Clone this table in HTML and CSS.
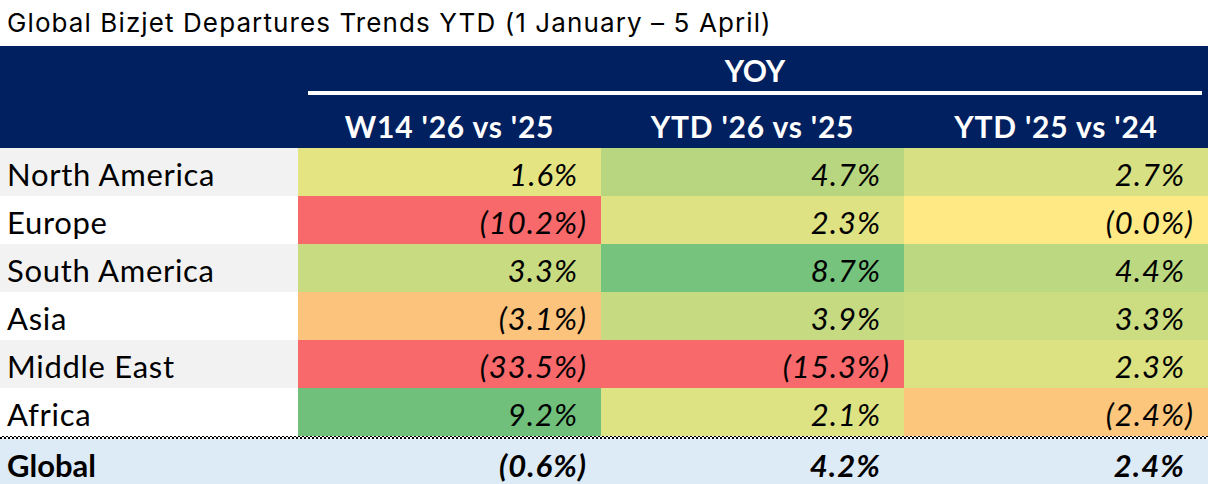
FILE: index.html
```html
<!DOCTYPE html>
<html>
<head>
<meta charset="utf-8">
<link rel="stylesheet" href="styles.css">
</head>
<body>
<div class="title">Global Bizjet Departures Trends YTD (1 January – 5 April)</div>
<div class="head">
  <div class="yoy">YOY</div>
  <div class="sub c1">W14 '26 vs '25</div>
  <div class="sub c2">YTD '26 vs '25</div>
  <div class="sub c3">YTD '25 vs '24</div>
</div>
<div class="grid">
  <div class="lab alt">North America</div>
  <div class="num" style="background:#E5E483">1.6%<span class="p">)</span></div>
  <div class="num" style="background:#B8D680">4.7%<span class="p">)</span></div>
  <div class="num" style="background:#D7E082">2.7%<span class="p">)</span></div>

  <div class="lab">Europe</div>
  <div class="num" style="background:#F8696B">(10.2%)</div>
  <div class="num" style="background:#DEE283">2.3%<span class="p">)</span></div>
  <div class="num" style="background:#FFE984">(0.0%)</div>

  <div class="lab alt">South America</div>
  <div class="num" style="background:#C8DB81">3.3%<span class="p">)</span></div>
  <div class="num" style="background:#76C37D">8.7%<span class="p">)</span></div>
  <div class="num" style="background:#BCD881">4.4%<span class="p">)</span></div>

  <div class="lab">Asia</div>
  <div class="num" style="background:#FCC37C">(3.1%)</div>
  <div class="num" style="background:#C5DA81">3.9%<span class="p">)</span></div>
  <div class="num" style="background:#CCDC81">3.3%<span class="p">)</span></div>

  <div class="lab alt">Middle East</div>
  <div class="num" style="background:#F8696B">(33.5%)</div>
  <div class="num" style="background:#F8696B">(15.3%)</div>
  <div class="num" style="background:#DCE182">2.3%<span class="p">)</span></div>

  <div class="lab">Africa</div>
  <div class="num" style="background:#70C07C">9.2%<span class="p">)</span></div>
  <div class="num" style="background:#DDE283">2.1%<span class="p">)</span></div>
  <div class="num" style="background:#FCC77C">(2.4%)</div>
</div>
<div class="sep"></div>
<div class="grid total">
  <div class="lab">Global</div>
  <div class="num">(0.6%)</div>
  <div class="num">4.2%<span class="p">)</span></div>
  <div class="num">2.4%<span class="p">)</span></div>
</div>
</body>
</html>
```

FILE: styles.css
```css
html, body {
  margin: 0;
  padding: 0;
  background: #ffffff;
}
body {
  width: 1208px;
  overflow: hidden;
}
.title {
  height: 46px;
  line-height: 46px;
  padding-left: 7px;
  font-family: "Inter", "Liberation Sans", sans-serif;
  font-size: 26px;
  letter-spacing: 1.1px;
  color: #000;
  box-sizing: border-box;
}
.head {
  background: #002060;
  height: 102px;
  display: grid;
  grid-template-columns: 298px 303px 303px 1fr;
  grid-template-rows: 49px 53px;
  color: #fff;
  font-family: "Lato", "Liberation Sans", sans-serif;
  font-weight: 700;
  font-size: 30px;
}
.yoy {
  grid-column: 2 / 5;
  grid-row: 1;
  margin-left: 10px;
  margin-right: 6px;
  border-bottom: 4px solid #fff;
  text-align: center;
  line-height: 48px;
}
.sub {
  grid-row: 2;
  text-align: center;
  line-height: 62px;
  letter-spacing: 0.8px;
}
.sub.c1 { grid-column: 2; }
.sub.c2 { grid-column: 3; }
.sub.c3 { grid-column: 4; }
.grid {
  display: grid;
  grid-template-columns: 298px 303px 303px 1fr;
  grid-auto-rows: 48px;
  font-family: "Lato", "Liberation Sans", sans-serif;
  font-size: 31px;
  color: #000;
}
.lab {
  padding-left: 7px;
  line-height: 52px;
  letter-spacing: 0.7px;
  background: #ffffff;
}
.lab.alt {
  background: #F2F2F2;
}
.num {
  text-align: right;
  font-style: italic;
  padding-right: 14px;
  line-height: 52px;
  letter-spacing: 1px;
}
.p {
  visibility: hidden;
}
.sep {
  height: 4px;
  margin-top: -1px;
  background-image: repeating-conic-gradient(#000 0 25%, #fff 0 50%);
  background-size: 4px 4px;
}
.total {
  background: #DDEBF7;
  font-weight: 700;
}
.total .lab {
  background: transparent;
  letter-spacing: 0;
}
```
